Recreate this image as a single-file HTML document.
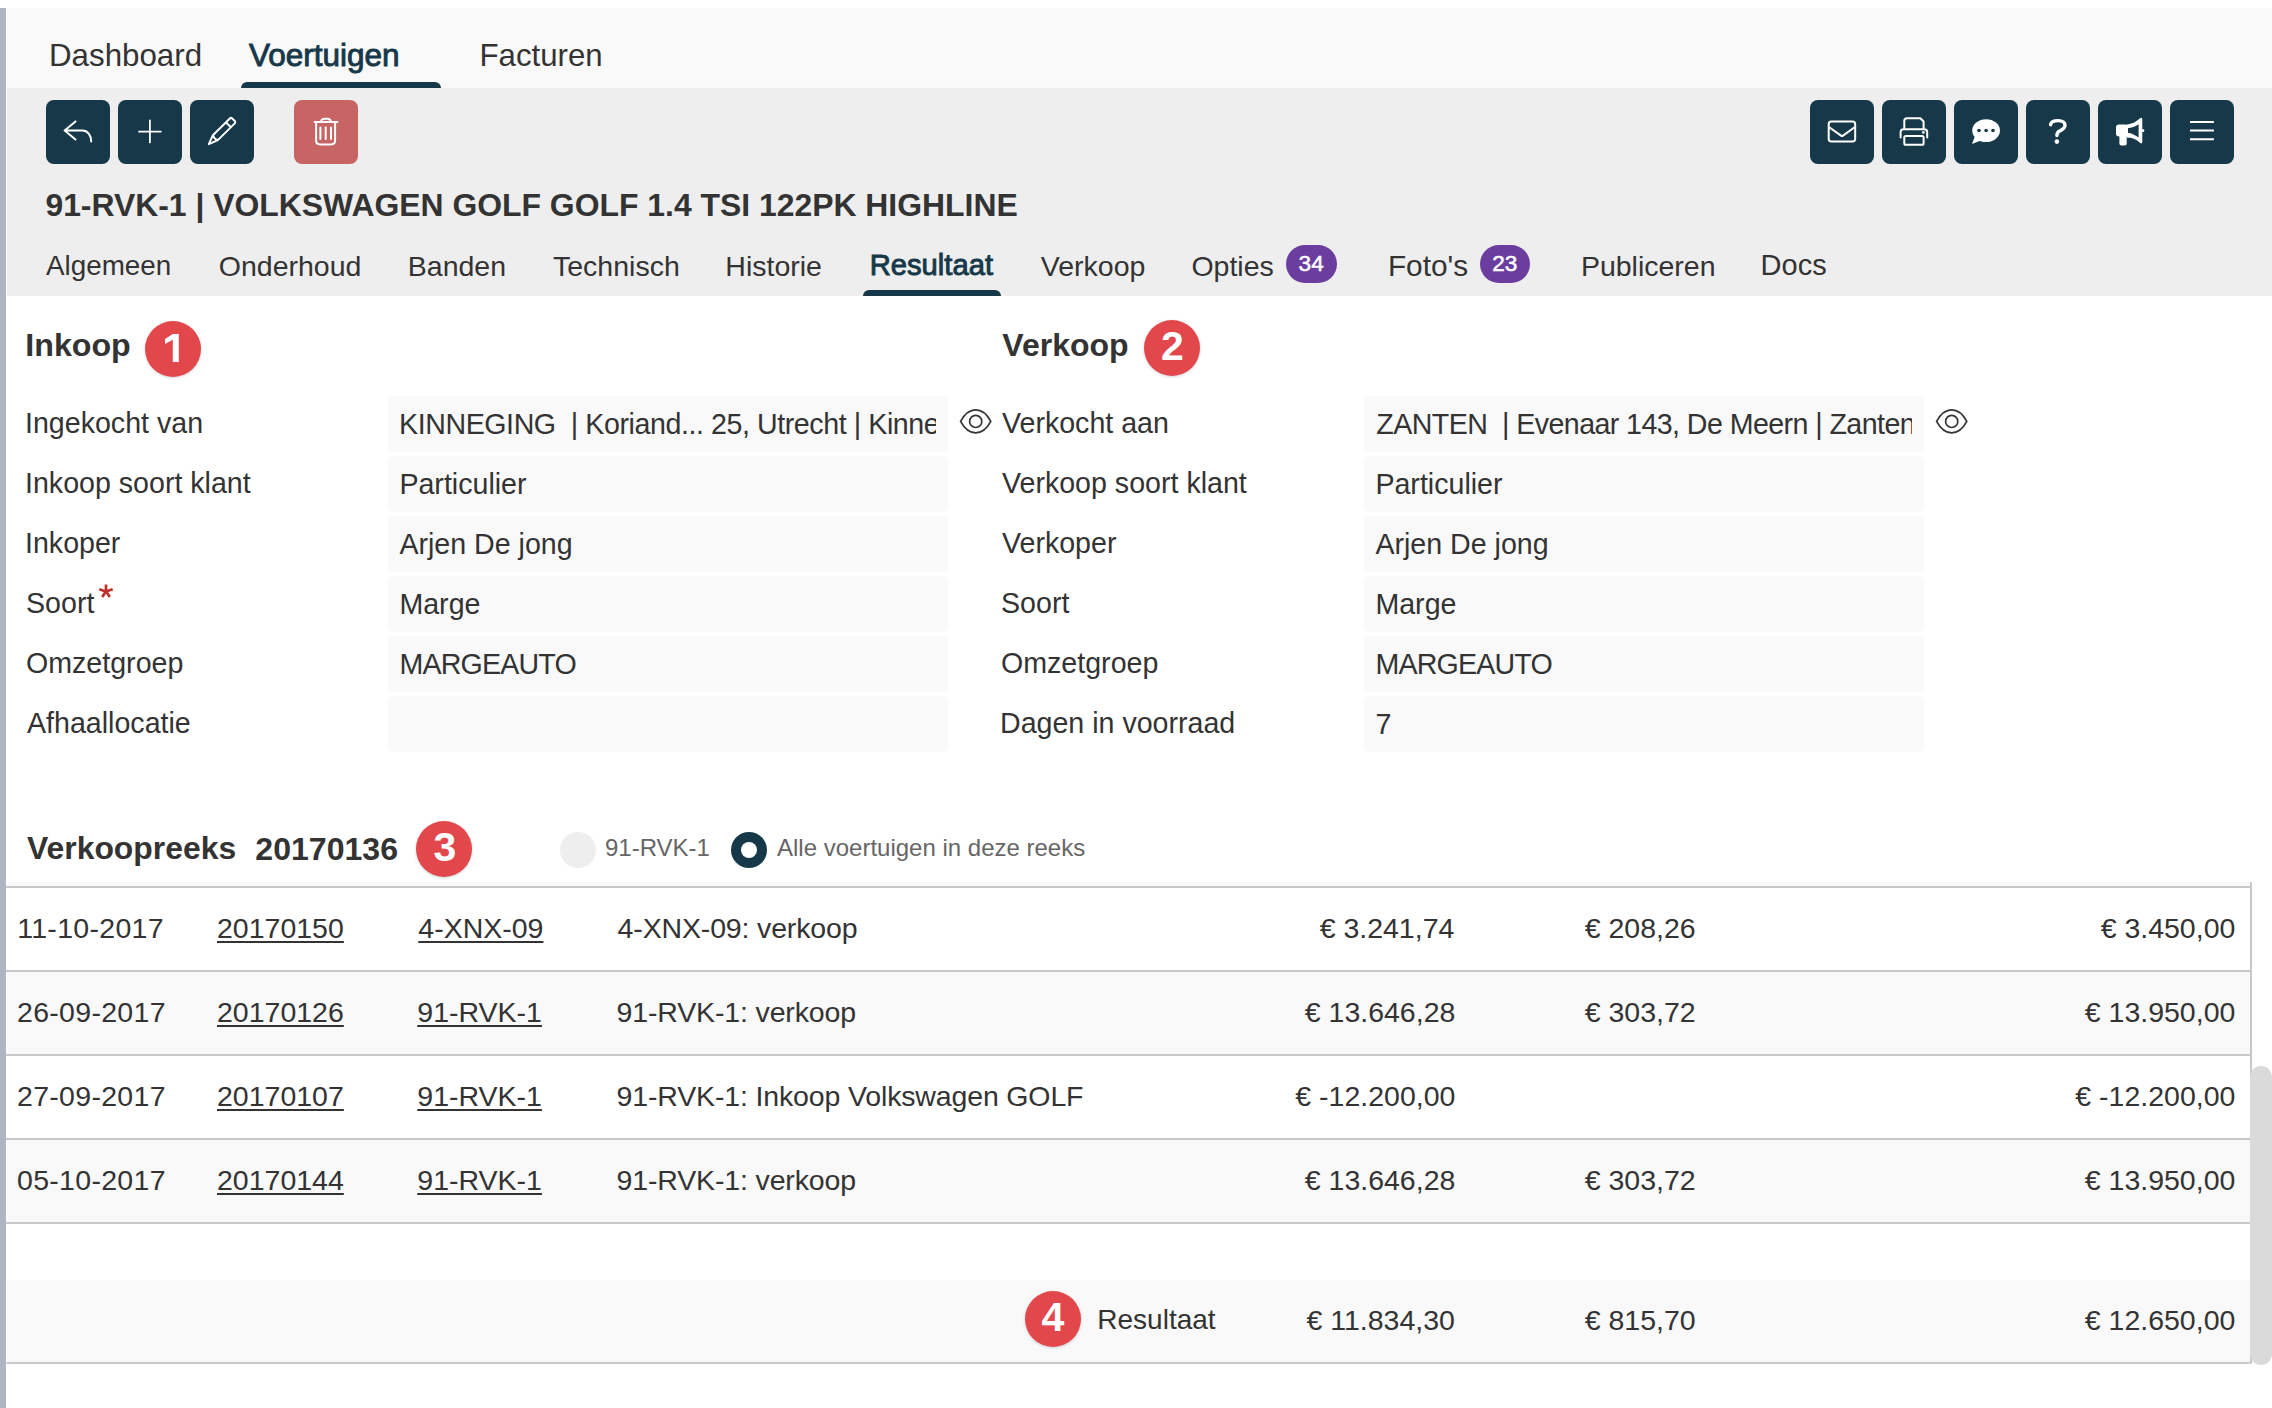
<!DOCTYPE html>
<html><head><meta charset="utf-8">
<style>
*{box-sizing:border-box;margin:0;padding:0}
html,body{width:2272px;height:1408px;overflow:hidden;background:#fff}
body{position:relative;font-family:"Liberation Sans",sans-serif;color:#333}
.a{position:absolute;line-height:1;white-space:pre;z-index:6}
.r{position:absolute}
.btn{position:absolute;top:100px;width:64px;height:64px;border-radius:8px;background:#163848}
.btn svg{position:absolute;left:0;top:0;width:64px;height:64px}
.ul{position:absolute;height:6px;background:#163848;border-radius:6px 6px 0 0}
.badge{position:absolute;top:245px;height:38px;border-radius:19px;background:#6a3d9f}
.circ{position:absolute;z-index:5;width:56px;height:56px;border-radius:50%;background:#e2474b;box-shadow:0 1px 3px rgba(0,0,0,0.18)}
.fld{position:absolute;width:560px;height:55.5px;background:#f9f9f9;border-radius:5px}
.hl{position:absolute;height:2px;background:#c8c8c8}
svg{overflow:visible}
</style></head><body>
<div class="r" style="left:0;top:8px;width:6px;height:1400px;background:#b0b6c1"></div>
<div class="r" style="left:7px;top:8px;width:2265px;height:80px;background:#f9f9f9"></div>
<div class="r" style="left:7px;top:88px;width:2265px;height:208px;background:#eeeeee"></div>
<div class="ul" style="left:241px;top:82px;width:200px"></div>
<div class="ul" style="left:863px;top:290px;width:138px"></div>

<!-- toolbar buttons -->
<div class="btn" style="left:46px"><svg viewBox="0 0 64 64" fill="none" stroke="#fff" stroke-width="2" stroke-linecap="round" stroke-linejoin="round"><path d="M29.5 21.4 L18.6 30.5 L29.5 39.5 M18.6 30.5 H36.4 C41.5 30.5 45.2 35 45.2 41.6"/></svg></div>
<div class="btn" style="left:118px"><svg viewBox="0 0 64 64" fill="none" stroke="#fff" stroke-width="1.8" stroke-linecap="round"><path d="M21 31.6 H42.8 M31.9 20.5 V42.4"/></svg></div>
<div class="btn" style="left:190px"><svg viewBox="0 0 64 64" fill="none" stroke="#fff" stroke-width="2" stroke-linejoin="round"><path d="M18.8 44.2 L22.89 35.17 L39.83 18.43 Q41 17.3 42.2 18.43 L44.78 21 Q45.9 22.2 44.78 23.38 L27.84 40.12 Z M35.94 22.32 L40.89 27.27 M22.89 35.17 Q23.9 38.9 27.84 40.12"/></svg></div>
<div class="btn" style="left:294px;background:#c66563"><svg viewBox="0 0 64 64" fill="none" stroke="#fff" stroke-width="2" stroke-linecap="round" stroke-linejoin="round"><path d="M20.6 21.9 H43.4 M26.9 21.6 Q27.6 18.7 30.5 18.7 H33.5 Q36.3 18.7 37 21.6 M22.1 22.4 V40.2 Q22.1 44.4 26.3 44.4 H36.9 Q41.1 44.4 41.1 40.2 V22.4 M26.4 27.4 V39 M31.7 27.4 V39 M37 27.4 V39"/></svg></div>

<div class="btn" style="left:1810px"><svg viewBox="0 0 64 64" fill="none" stroke="#fff" stroke-width="2" stroke-linejoin="round"><rect x="18.7" y="21.6" width="26.5" height="19.8" rx="2.6"/><path d="M18.9 27 L31 35.6 Q32 36.3 33 35.6 L45 27"/></svg></div>
<div class="btn" style="left:1882px"><svg viewBox="0 0 64 64" fill="none" stroke="#fff" stroke-width="2" stroke-linejoin="round" stroke-linecap="round"><path d="M22.3 27.8 V21 Q22.3 18.3 25 18.3 H38.4 L41.6 21.5 V27.8"/><path d="M18.6 37.5 V32 Q18.6 29.2 21.6 29.2 H42.2 Q45.2 29.2 45.2 32 V37.5"/><rect x="22.3" y="36" width="19.3" height="8.8" rx="1.6"/><circle cx="41.4" cy="32.4" r="1.35" fill="#fff" stroke="none"/></svg></div>
<div class="btn" style="left:1954px"><svg viewBox="0 0 64 64"><ellipse cx="32.1" cy="30.6" rx="13.9" ry="11.4" fill="#fff"/><path d="M21 36 L18 44 L27 40.5 Z" fill="#fff"/><circle cx="25" cy="30.5" r="1.8" fill="#163848"/><circle cx="32.1" cy="30.5" r="1.8" fill="#163848"/><circle cx="39" cy="30.5" r="1.8" fill="#163848"/></svg></div>
<div class="btn" style="left:2026px"><svg viewBox="0 0 64 64" fill="none" stroke="#fff" stroke-width="3.4" stroke-linecap="round"><path d="M24.6 24.8 C24.8 21.7 27.5 20.6 32 20.6 C36.6 20.6 39 22.6 39 25.6 C39 28.6 36.4 29.6 33.6 31 C31.4 32.2 30.9 33.4 30.9 35.5"/><circle cx="30.9" cy="41.6" r="2.3" fill="#fff" stroke="none"/></svg></div>
<div class="btn" style="left:2098px"><svg viewBox="0 0 64 64"><path d="M28.6 24.4 C34 24.4 38 22 41.6 18.6 Q44.3 16.3 44.3 19.6 V41.6 Q44.3 45 41.6 42.4 C38 39 34 37.4 28.6 37.4 Z" fill="#fff"/><path d="M29.2 28.2 C34 28 37.6 26.4 40.6 24.2 V37.6 C37.6 35.4 34 32.9 29.2 32.7 Z" fill="#163848"/><circle cx="44.8" cy="30.5" r="1.5" fill="#fff"/><rect x="18" y="24.4" width="12" height="12" rx="3" fill="#fff"/><rect x="21.4" y="32" width="7.3" height="13.6" rx="2" fill="#fff"/></svg></div>
<div class="btn" style="left:2170px"><svg viewBox="0 0 64 64" fill="none" stroke="#fff" stroke-width="2"><path d="M20 21.9 H43.9 M20 30.5 H43.9 M20 39.2 H43.9"/></svg></div>

<!-- badges -->
<div class="badge" style="left:1286px;width:51px"></div>
<div class="badge" style="left:1480px;width:50px"></div>

<!-- section circles -->
<div class="circ" style="left:145px;top:321px"></div>
<div class="circ" style="left:1144px;top:320px"></div>
<div class="circ" style="left:416px;top:821px"></div>
<div class="circ" style="left:1025px;top:1291px"></div>

<svg class="r" style="left:0;top:0;z-index:7" width="400" height="400" viewBox="0 0 400 400"><path d="M172.8 334 H178.8 V362 H172.8 V339.8 L165 344 V339 Z" fill="#fff"/></svg>
<!-- fields -->
<div class="fld" style="left:388px;top:396px"></div>
<div class="fld" style="left:388px;top:456px"></div>
<div class="fld" style="left:388px;top:516px"></div>
<div class="fld" style="left:388px;top:576px"></div>
<div class="fld" style="left:388px;top:636px"></div>
<div class="fld" style="left:388px;top:696px"></div>
<div class="fld" style="left:1364px;top:396px"></div>
<div class="fld" style="left:1364px;top:456px"></div>
<div class="fld" style="left:1364px;top:516px"></div>
<div class="fld" style="left:1364px;top:576px"></div>
<div class="fld" style="left:1364px;top:636px"></div>
<div class="fld" style="left:1364px;top:696px"></div>

<!-- eye icons -->
<svg class="r" style="left:0;top:0" width="2272" height="1408" viewBox="0 0 2272 1408" fill="none" stroke="#333" stroke-width="1.7">
<path d="M960.6 421.4 C965 413.2 969.8 409.9 975.7 409.9 C981.6 409.9 986.4 413.2 990.8 421.4 C986.4 429.6 981.6 432.9 975.7 432.9 C969.8 432.9 965 429.6 960.6 421.4 Z"/><circle cx="975.7" cy="421.4" r="6.1"/>
<path d="M1936.6 421.4 C1941 413.2 1945.8 409.9 1951.7 409.9 C1957.6 409.9 1962.4 413.2 1966.8 421.4 C1962.4 429.6 1957.6 432.9 1951.7 432.9 C1945.8 432.9 1941 429.6 1936.6 421.4 Z"/><circle cx="1951.7" cy="421.4" r="6.1"/>
</svg>
<!-- asterisk -->
<svg class="r" style="left:0;top:0" width="200" height="700" viewBox="0 0 200 700" fill="none" stroke="#c0302b" stroke-width="2.7"><path d="M106 592 V584.5 M106 591.5 L99.3 589.3 M106 591.5 L112.7 589.3 M106 591.3 L102.2 597 M106 591.3 L109.8 597"/></svg>

<!-- radios -->
<div class="r" style="left:560px;top:832px;width:36px;height:36px;border-radius:50%;background:#eeeeee"></div>
<div class="r" style="left:731px;top:832px;width:36px;height:36px;border-radius:50%;background:#163848"></div>
<div class="r" style="left:741px;top:842px;width:16px;height:16px;border-radius:50%;background:#fff"></div>

<!-- table -->
<div class="r" style="left:7px;top:882px;width:2243px;height:4px;background:#f9f9f9"></div>
<div class="hl" style="left:6px;top:886px;width:2244px"></div>
<div class="hl" style="left:6px;top:970px;width:2244px"></div>
<div class="r" style="left:7px;top:972px;width:2243px;height:82px;background:#f9f9f9"></div>
<div class="hl" style="left:6px;top:1054px;width:2244px"></div>
<div class="hl" style="left:6px;top:1138px;width:2244px"></div>
<div class="r" style="left:7px;top:1140px;width:2243px;height:82px;background:#f9f9f9"></div>
<div class="hl" style="left:6px;top:1222px;width:2244px"></div>
<div class="r" style="left:7px;top:1280px;width:2243px;height:82px;background:#f9f9f9"></div>
<div class="hl" style="left:6px;top:1362px;width:2244px;border-radius:0 0 3px 3px"></div>
<div class="r" style="left:2250px;top:882px;width:2px;height:482px;background:#c8c8c8"></div>
<div class="r" style="left:2250px;top:1066px;width:22px;height:299px;border-radius:11px;background:#dadada"></div>

<div class="a" style="left:49.00px;top:40.39px;font-size:31.30px;font-weight:400;color:#333333;">Dashboard</div>
<div class="a" style="left:249.00px;top:40.23px;font-size:31.50px;font-weight:400;color:#163848;-webkit-text-stroke:0.9px #163848;">Voertuigen</div>
<div class="a" style="left:479.50px;top:40.48px;font-size:31.20px;font-weight:400;color:#333333;">Facturen</div>
<div class="a" style="left:45.40px;top:189.88px;font-size:31.90px;font-weight:700;color:#333333;">91-RVK-1 | VOLKSWAGEN GOLF GOLF 1.4 TSI 122PK HIGHLINE</div>
<div class="a" style="left:46.00px;top:252.37px;font-size:27.80px;font-weight:400;color:#333333;">Algemeen</div>
<div class="a" style="left:218.80px;top:251.78px;font-size:28.50px;font-weight:400;color:#333333;">Onderhoud</div>
<div class="a" style="left:407.80px;top:251.78px;font-size:28.50px;font-weight:400;color:#333333;">Banden</div>
<div class="a" style="left:553.00px;top:251.78px;font-size:28.50px;font-weight:400;color:#333333;">Technisch</div>
<div class="a" style="left:725.30px;top:251.78px;font-size:28.50px;font-weight:400;color:#333333;">Historie</div>
<div class="a" style="left:1040.80px;top:251.78px;font-size:28.50px;font-weight:400;color:#333333;">Verkoop</div>
<div class="a" style="left:1191.40px;top:251.78px;font-size:28.50px;font-weight:400;color:#333333;">Opties</div>
<div class="a" style="left:1387.90px;top:250.67px;font-size:29.80px;font-weight:400;color:#333333;">Foto's</div>
<div class="a" style="left:1580.90px;top:251.78px;font-size:28.50px;font-weight:400;color:#333333;">Publiceren</div>
<div class="a" style="left:1760.60px;top:251.35px;font-size:29.00px;font-weight:400;color:#333333;">Docs</div>
<div class="a" style="left:869.70px;top:251.18px;font-size:29.20px;font-weight:400;color:#163848;-webkit-text-stroke:0.9px #163848;">Resultaat</div>
<div class="a" style="left:25.30px;top:328.63px;font-size:32.20px;font-weight:700;color:#333333;">Inkoop</div>
<div class="a" style="left:1002.30px;top:328.80px;font-size:32.00px;font-weight:700;color:#333333;">Verkoop</div>
<div class="a" style="left:25.00px;top:408.69px;font-size:28.60px;font-weight:400;color:#333333;">Ingekocht van</div>
<div class="a" style="left:1002.00px;top:408.69px;font-size:28.60px;font-weight:400;color:#333333;">Verkocht aan</div>
<div style="position:absolute;left:388px;top:396px;width:548px;height:56px;overflow:hidden"><div class="a" style="left:11.00px;top:13.69px;font-size:28.60px;font-weight:400;color:#333333;letter-spacing:-0.42px;">KINNEGING  | Koriand... 25, Utrecht | Kinneging</div></div>
<div style="position:absolute;left:1364px;top:396px;width:548px;height:56px;overflow:hidden"><div class="a" style="left:12.30px;top:13.69px;font-size:28.60px;font-weight:400;color:#333333;letter-spacing:-0.57px;">ZANTEN  | Evenaar 143, De Meern | Zanten</div></div>
<div class="a" style="left:25.00px;top:468.69px;font-size:28.60px;font-weight:400;color:#333333;">Inkoop soort klant</div>
<div class="a" style="left:1002.00px;top:468.69px;font-size:28.60px;font-weight:400;color:#333333;">Verkoop soort klant</div>
<div style="position:absolute;left:388px;top:456px;width:548px;height:56px;overflow:hidden"><div class="a" style="left:11.40px;top:13.69px;font-size:28.60px;font-weight:400;color:#333333;">Particulier</div></div>
<div style="position:absolute;left:1364px;top:456px;width:548px;height:56px;overflow:hidden"><div class="a" style="left:11.40px;top:13.69px;font-size:28.60px;font-weight:400;color:#333333;">Particulier</div></div>
<div class="a" style="left:25.00px;top:528.69px;font-size:28.60px;font-weight:400;color:#333333;">Inkoper</div>
<div class="a" style="left:1002.00px;top:528.69px;font-size:28.60px;font-weight:400;color:#333333;">Verkoper</div>
<div style="position:absolute;left:388px;top:516px;width:548px;height:56px;overflow:hidden"><div class="a" style="left:11.40px;top:13.69px;font-size:28.60px;font-weight:400;color:#333333;">Arjen De jong</div></div>
<div style="position:absolute;left:1364px;top:516px;width:548px;height:56px;overflow:hidden"><div class="a" style="left:11.40px;top:13.69px;font-size:28.60px;font-weight:400;color:#333333;">Arjen De jong</div></div>
<div class="a" style="left:26.00px;top:588.69px;font-size:28.60px;font-weight:400;color:#333333;">Soort</div>
<div class="a" style="left:1001.00px;top:588.69px;font-size:28.60px;font-weight:400;color:#333333;">Soort</div>
<div style="position:absolute;left:388px;top:576px;width:548px;height:56px;overflow:hidden"><div class="a" style="left:11.40px;top:13.69px;font-size:28.60px;font-weight:400;color:#333333;">Marge</div></div>
<div style="position:absolute;left:1364px;top:576px;width:548px;height:56px;overflow:hidden"><div class="a" style="left:11.40px;top:13.69px;font-size:28.60px;font-weight:400;color:#333333;">Marge</div></div>
<div class="a" style="left:26.00px;top:648.69px;font-size:28.60px;font-weight:400;color:#333333;">Omzetgroep</div>
<div class="a" style="left:1001.00px;top:648.69px;font-size:28.60px;font-weight:400;color:#333333;">Omzetgroep</div>
<div style="position:absolute;left:388px;top:636px;width:548px;height:56px;overflow:hidden"><div class="a" style="left:11.40px;top:13.69px;font-size:28.60px;font-weight:400;color:#333333;letter-spacing:-0.8px;">MARGEAUTO</div></div>
<div style="position:absolute;left:1364px;top:636px;width:548px;height:56px;overflow:hidden"><div class="a" style="left:11.40px;top:13.69px;font-size:28.60px;font-weight:400;color:#333333;letter-spacing:-0.8px;">MARGEAUTO</div></div>
<div class="a" style="left:27.00px;top:708.69px;font-size:28.60px;font-weight:400;color:#333333;">Afhaallocatie</div>
<div class="a" style="left:1000.00px;top:708.69px;font-size:28.60px;font-weight:400;color:#333333;">Dagen in voorraad</div>
<div style="position:absolute;left:1364px;top:696px;width:548px;height:56px;overflow:hidden"><div class="a" style="left:11.40px;top:13.69px;font-size:28.60px;font-weight:400;color:#333333;">7</div></div>
<div class="a" style="left:27.00px;top:832.88px;font-size:31.90px;font-weight:700;color:#333333;">Verkoopreeks</div>
<div class="a" style="left:255.30px;top:832.72px;font-size:32.10px;font-weight:700;color:#333333;">20170136</div>
<div class="a" style="left:605.00px;top:835.60px;font-size:24.00px;font-weight:400;color:#666666;">91-RVK-1</div>
<div class="a" style="left:777.00px;top:835.60px;font-size:24.00px;font-weight:400;color:#666666;">Alle voertuigen in deze reeks</div>
<div class="a" style="left:17.20px;top:913.77px;font-size:28.50px;font-weight:400;color:#333333;letter-spacing:0.3px;">11-10-2017</div>
<div class="a" style="left:217.00px;top:913.77px;font-size:28.50px;font-weight:400;color:#333333;text-decoration:underline;text-decoration-thickness:2px;text-underline-offset:3px;">20170150</div>
<div class="a" style="left:418.30px;top:913.77px;font-size:28.50px;font-weight:400;color:#333333;text-decoration:underline;text-decoration-thickness:2px;text-underline-offset:3px;">4-XNX-09</div>
<div class="a" style="left:617.60px;top:913.77px;font-size:28.50px;font-weight:400;color:#333333;letter-spacing:-0.15px;">4-XNX-09: verkoop</div>
<div class="a" style="left:1319.64px;top:913.77px;font-size:28.50px;font-weight:400;color:#333333;">€ 3.241,74</div>
<div class="a" style="left:1584.71px;top:913.77px;font-size:28.50px;font-weight:400;color:#333333;">€ 208,26</div>
<div class="a" style="left:2100.64px;top:913.77px;font-size:28.50px;font-weight:400;color:#333333;">€ 3.450,00</div>
<div class="a" style="left:17.00px;top:997.77px;font-size:28.50px;font-weight:400;color:#333333;letter-spacing:0.3px;">26-09-2017</div>
<div class="a" style="left:217.00px;top:997.77px;font-size:28.50px;font-weight:400;color:#333333;text-decoration:underline;text-decoration-thickness:2px;text-underline-offset:3px;">20170126</div>
<div class="a" style="left:417.30px;top:997.77px;font-size:28.50px;font-weight:400;color:#333333;text-decoration:underline;text-decoration-thickness:2px;text-underline-offset:3px;">91-RVK-1</div>
<div class="a" style="left:616.60px;top:997.77px;font-size:28.50px;font-weight:400;color:#333333;letter-spacing:-0.15px;">91-RVK-1: verkoop</div>
<div class="a" style="left:1304.79px;top:997.77px;font-size:28.50px;font-weight:400;color:#333333;">€ 13.646,28</div>
<div class="a" style="left:1584.71px;top:997.77px;font-size:28.50px;font-weight:400;color:#333333;">€ 303,72</div>
<div class="a" style="left:2084.79px;top:997.77px;font-size:28.50px;font-weight:400;color:#333333;">€ 13.950,00</div>
<div class="a" style="left:17.00px;top:1081.78px;font-size:28.50px;font-weight:400;color:#333333;letter-spacing:0.3px;">27-09-2017</div>
<div class="a" style="left:217.00px;top:1081.78px;font-size:28.50px;font-weight:400;color:#333333;text-decoration:underline;text-decoration-thickness:2px;text-underline-offset:3px;">20170107</div>
<div class="a" style="left:417.30px;top:1081.78px;font-size:28.50px;font-weight:400;color:#333333;text-decoration:underline;text-decoration-thickness:2px;text-underline-offset:3px;">91-RVK-1</div>
<div class="a" style="left:616.60px;top:1081.78px;font-size:28.50px;font-weight:400;color:#333333;letter-spacing:-0.15px;">91-RVK-1: Inkoop Volkswagen GOLF</div>
<div class="a" style="left:1295.30px;top:1081.78px;font-size:28.50px;font-weight:400;color:#333333;">€ -12.200,00</div>
<div class="a" style="left:2075.30px;top:1081.78px;font-size:28.50px;font-weight:400;color:#333333;">€ -12.200,00</div>
<div class="a" style="left:17.00px;top:1165.78px;font-size:28.50px;font-weight:400;color:#333333;letter-spacing:0.3px;">05-10-2017</div>
<div class="a" style="left:217.00px;top:1165.78px;font-size:28.50px;font-weight:400;color:#333333;text-decoration:underline;text-decoration-thickness:2px;text-underline-offset:3px;">20170144</div>
<div class="a" style="left:417.30px;top:1165.78px;font-size:28.50px;font-weight:400;color:#333333;text-decoration:underline;text-decoration-thickness:2px;text-underline-offset:3px;">91-RVK-1</div>
<div class="a" style="left:616.60px;top:1165.78px;font-size:28.50px;font-weight:400;color:#333333;letter-spacing:-0.15px;">91-RVK-1: verkoop</div>
<div class="a" style="left:1304.79px;top:1165.78px;font-size:28.50px;font-weight:400;color:#333333;">€ 13.646,28</div>
<div class="a" style="left:1584.71px;top:1165.78px;font-size:28.50px;font-weight:400;color:#333333;">€ 303,72</div>
<div class="a" style="left:2084.79px;top:1165.78px;font-size:28.50px;font-weight:400;color:#333333;">€ 13.950,00</div>
<div class="a" style="left:1097.30px;top:1306.20px;font-size:28.00px;font-weight:400;color:#333333;">Resultaat</div>
<div class="a" style="left:1161.10px;top:326.15px;font-size:41.00px;font-weight:700;color:#fff;z-index:7;">2</div>
<div class="a" style="left:433.50px;top:826.95px;font-size:41.00px;font-weight:700;color:#fff;z-index:7;">3</div>
<div class="a" style="left:1041.40px;top:1297.15px;font-size:41.00px;font-weight:700;color:#fff;z-index:7;">4</div>
<div class="a" style="left:1298.62px;top:252.89px;font-size:22.60px;font-weight:400;color:#fff;-webkit-text-stroke:0.5px #fff;">34</div>
<div class="a" style="left:1492.22px;top:252.89px;font-size:22.60px;font-weight:400;color:#fff;-webkit-text-stroke:0.5px #fff;">23</div>
<div class="a" style="left:1306.41px;top:1305.78px;font-size:28.50px;font-weight:400;color:#333333;">€ 11.834,30</div>
<div class="a" style="left:1584.71px;top:1305.78px;font-size:28.50px;font-weight:400;color:#333333;">€ 815,70</div>
<div class="a" style="left:2084.79px;top:1305.78px;font-size:28.50px;font-weight:400;color:#333333;">€ 12.650,00</div>
</body></html>
